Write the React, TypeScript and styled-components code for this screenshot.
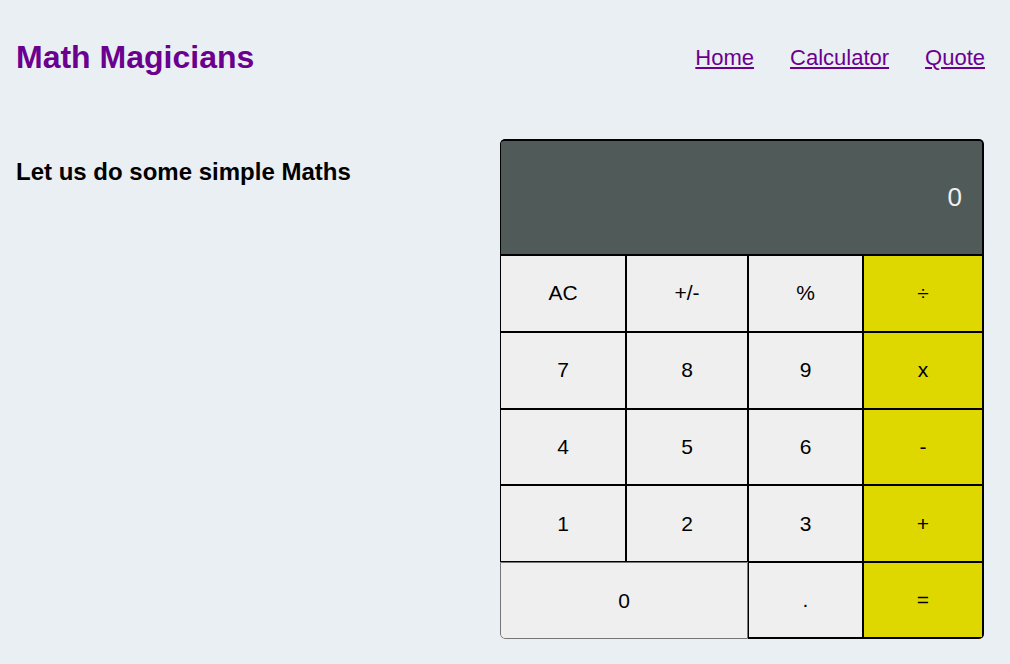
import React from 'react';
import styled, { createGlobalStyle } from 'styled-components';

const Global = createGlobalStyle`
  html, body { margin: 0; padding: 0; }
  body {
    background: #eaeff3;
    font-family: "Liberation Sans", Arial, sans-serif;
    width: 1010px;
    min-height: 664px;
  }
`;

const Page = styled.div`
  display: flex;
  flex-direction: column;
`;

const Header = styled.header`
  height: 114px;
  display: flex;
  align-items: center;
  justify-content: space-between;
  padding: 0 25px 0 16px;
`;

const Title = styled.h1`
  margin: 0;
  font-size: 32px;
  font-weight: bold;
  color: #6b008f;
`;

const Nav = styled.nav`
  display: flex;
  gap: 36px;
  margin-top: 2px;
`;

const NavLink = styled.a`
  font-size: 22px;
  color: #6b008f;
  text-decoration: underline;
`;

const Main = styled.main`
  display: flex;
  justify-content: space-between;
  align-items: flex-start;
  padding: 25px 26px 0 16px;
`;

const Intro = styled.h2`
  margin: 19px 0 0;
  font-size: 24px;
  font-weight: bold;
  color: #000;
`;

const Calc = styled.div`
  width: 484px;
  height: 500px;
  display: grid;
  grid-template-columns: 126px 122px 115px 121px;
  grid-template-rows: 116px repeat(5, 1fr);
  border-radius: 5px;
  overflow: hidden;
`;

const Display = styled.div`
  grid-column: 1 / span 4;
  background: #4f5a59;
  border: 1px solid #000;
  border-width: 2px 2px 1px 1px;
  border-radius: 4px 4px 0 0;
  display: flex;
  align-items: center;
  justify-content: flex-end;
  padding: 0 20px 0 0;
  color: #f0f0f0;
  font-size: 26px;
  box-sizing: border-box;
`;

const Key = styled.button<{ $op?: boolean; $wide?: boolean; $last?: boolean }>`
  box-sizing: border-box;
  margin: 0;
  padding: 0;
  font-family: "Liberation Sans", Arial, sans-serif;
  font-size: 21px;
  color: #000;
  background: ${(p) => (p.$op ? '#ded800' : '#efefef')};
  border: 1px solid ${(p) => (p.$wide ? '#767676' : '#000')};
  border-right-width: ${(p) => (p.$op ? '2px' : '1px')};
  border-bottom-width: ${(p) => (p.$last && !p.$wide ? '2px' : '1px')};
  border-radius: ${(p) => (p.$wide ? '0 0 0 5px' : '0')};
  grid-column: ${(p) => (p.$wide ? 'span 2' : 'auto')};
  display: flex;
  align-items: center;
  justify-content: center;
`;

const keys: { label: string; op?: boolean; wide?: boolean; last?: boolean }[] = [
  { label: 'AC' }, { label: '+/-' }, { label: '%' }, { label: '÷', op: true },
  { label: '7' }, { label: '8' }, { label: '9' }, { label: 'x', op: true },
  { label: '4' }, { label: '5' }, { label: '6' }, { label: '-', op: true },
  { label: '1' }, { label: '2' }, { label: '3' }, { label: '+', op: true },
  { label: '0', wide: true, last: true }, { label: '.', last: true }, { label: '=', op: true, last: true },
];

export default function App() {
  return (
    <Page>
      <Global />
      <Header>
        <Title>Math Magicians</Title>
        <Nav>
          <NavLink href="#">Home</NavLink>
          <NavLink href="#">Calculator</NavLink>
          <NavLink href="#">Quote</NavLink>
        </Nav>
      </Header>
      <Main>
        <Intro>Let us do some simple Maths</Intro>
        <Calc>
          <Display>0</Display>
          {keys.map((k) => (
            <Key key={k.label} $op={k.op} $wide={k.wide} $last={k.last}>
              {k.label}
            </Key>
          ))}
        </Calc>
      </Main>
    </Page>
  );
}
